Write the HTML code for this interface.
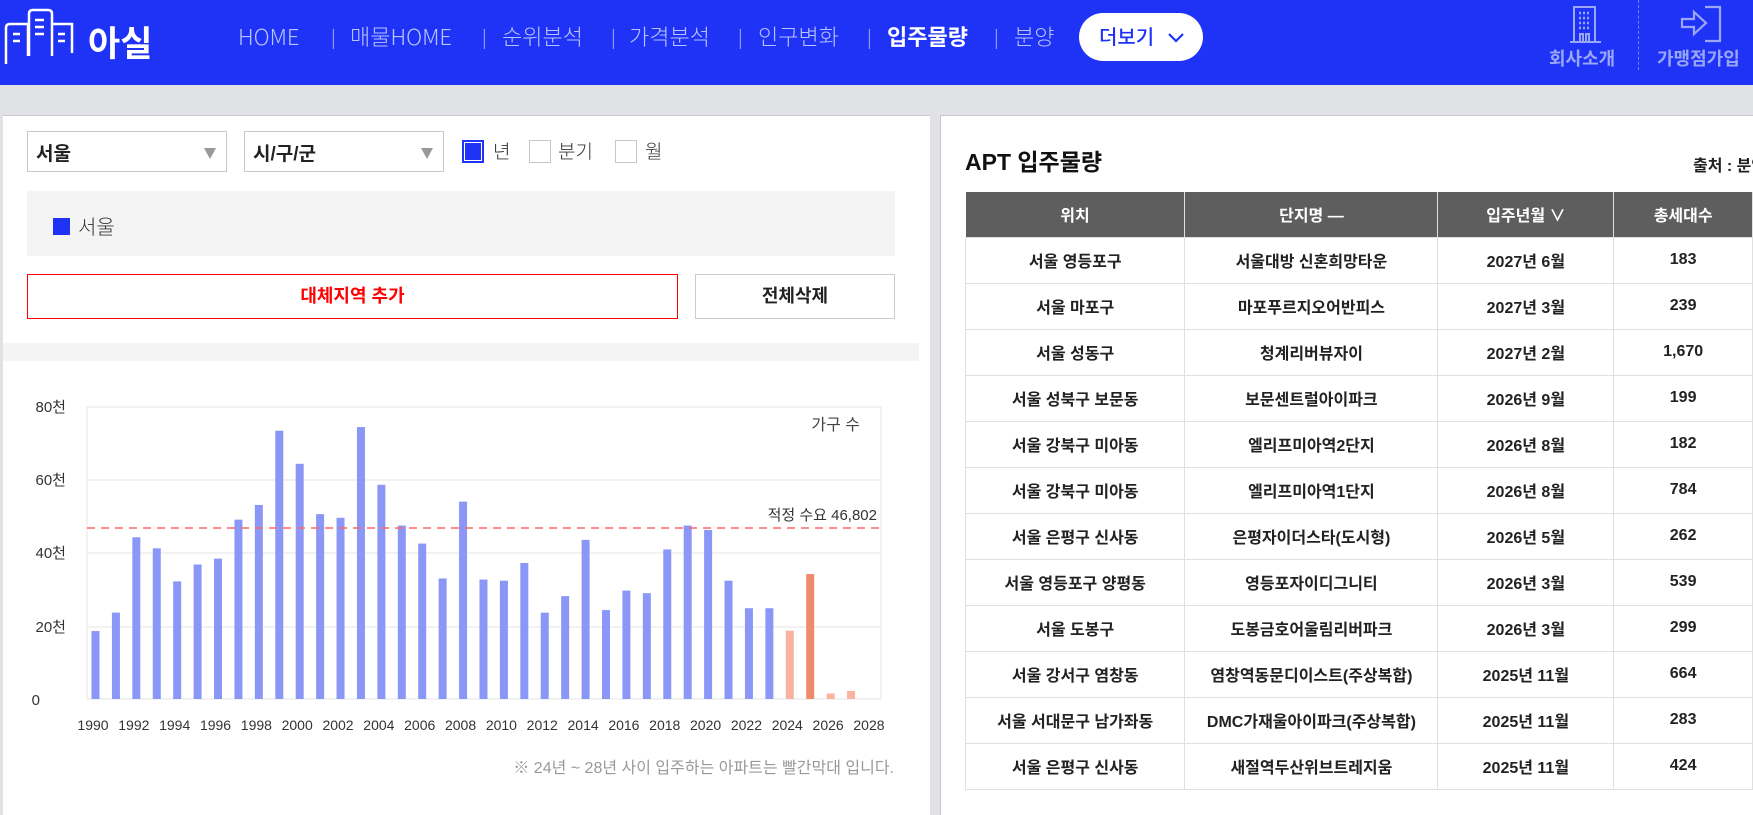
<!DOCTYPE html>
<html><head><meta charset="utf-8"><style>
*{margin:0;padding:0;box-sizing:border-box}
body{width:1753px;height:775px;overflow:hidden;background:#e1e2e6;font-family:"Liberation Sans","Noto Sans CJK KR",sans-serif;position:relative}
.hdr{position:absolute;left:0;top:0;width:1753px;height:85px;background:#1f33f7}
.abs{position:absolute;white-space:nowrap}
.nav{color:#b8c3ff;font-size:22px;font-weight:300;top:20px;font-family:"Noto Sans CJK KR",sans-serif}
.sep{color:#8e9cf5;font-size:18px;top:24px;font-family:"Noto Sans CJK KR",sans-serif}
.lp{position:absolute;left:3px;top:115px;width:927px;height:700px;background:#fff;border-top:1px solid #c8c8cc}
.rp{position:absolute;left:940px;top:115px;width:820px;height:700px;background:#fff;border-top:1px solid #c8c8cc;border-left:1px solid #c8c8cc}
.sel{position:absolute;border:1px solid #c6c8cf;background:#fff;font-size:19px;font-weight:bold;color:#222;padding:7px 0 0 8px}
.sel:after{content:"";position:absolute;right:10px;top:16px;border-left:6px solid transparent;border-right:6px solid transparent;border-top:11px solid #999}
.cb{position:absolute;width:22px;height:23px;border:1px solid #c6c8cf;background:#fff}
.cbt{position:absolute;font-size:19px;color:#333;font-weight:300}
table{position:absolute;left:965px;top:192px;border-collapse:collapse;font-size:16px;font-weight:bold;color:#222}
th{background:#5e5e5e;color:#fff;height:45px;font-weight:bold;border-right:1px solid #e0e0e0;text-align:center;vertical-align:middle}
td{height:46px;border:1px solid #e0e0e0;text-align:center;vertical-align:middle}
</style></head><body>
<div class="hdr"></div>
<svg class="abs" style="left:0;top:0" width="160" height="70">
<g fill="none" stroke="#fff" stroke-width="2.5">
<path d="M6 64 V28 Q6 24 10 24 H28 V56"/>
<path d="M29 56 V14 Q29 10 33 10 H48 Q52 10 52 14 V56"/>
<path d="M52 24 H72 V53"/>
<path d="M13 34h7M13 41h7M35 20h9M35 27h9M35 34h9M58 34h7M58 41h7"/>
</g>
<text x="88" y="56" fill="#fff" font-size="35" font-weight="bold" font-family="Noto Sans CJK KR,sans-serif">아실</text>
</svg>
<div class="abs nav" style="left:238px">HOME</div>
<div class="abs sep" style="left:331px">|</div>
<div class="abs nav" style="left:350px">매물HOME</div>
<div class="abs sep" style="left:482px">|</div>
<div class="abs nav" style="left:502px">순위분석</div>
<div class="abs sep" style="left:611px">|</div>
<div class="abs nav" style="left:629px">가격분석</div>
<div class="abs sep" style="left:738px">|</div>
<div class="abs nav" style="left:758px">인구변화</div>
<div class="abs sep" style="left:867px">|</div>
<div class="abs nav" style="left:887px;color:#fff;font-weight:bold">입주물량</div>
<div class="abs sep" style="left:994px">|</div>
<div class="abs nav" style="left:1014px">분양</div>
<div class="abs" style="left:1079px;top:13px;width:124px;height:48px;background:#fff;border-radius:24px;color:#1f33f7;font-size:20px;font-weight:500;padding:10px 0 0 20px;font-family:'Noto Sans CJK KR',sans-serif;line-height:26px">더보기
<svg style="position:absolute;left:88px;top:19px" width="18" height="12"><path d="M2 2l7 7 7-7" fill="none" stroke="#1f33f7" stroke-width="2.2"/></svg></div>
<svg class="abs" style="left:1565px;top:5px" width="40" height="40" fill="none" stroke="#9aa6f8" stroke-width="2"><path d="M5 37h31M9 37V2h21v35M15 37v-8h3v8M21 37v-8h3v8"/><path d="M14 8h2M18 8h2M22 8h2M14 13h2M18 13h2M22 13h2M14 18h2M18 18h2M22 18h2M14 23h2M18 23h2M22 23h2" stroke-width="2.5"/></svg>
<div class="abs" style="left:1549px;top:45px;color:#9aa6f8;font-size:18px;font-weight:bold">회사소개</div>
<div class="abs" style="left:1638px;top:0;height:70px;border-left:1px dashed #7584f0"></div>
<svg class="abs" style="left:1679px;top:5px" width="46" height="38" fill="none" stroke="#9aa6f8" stroke-width="2.2"><path d="M26 2h15v34H26"/><path d="M3 14h12V7l12 11-12 11v-7H3z"/></svg>
<div class="abs" style="left:1657px;top:45px;color:#9aa6f8;font-size:18px;font-weight:bold">가맹점가입</div>

<div class="lp"></div>
<div class="sel" style="left:27px;top:131px;width:200px;height:41px">서울</div>
<div class="sel" style="left:244px;top:131px;width:200px;height:41px">시/구/군</div>
<div class="cb" style="left:462px;top:140px;border:2px solid #1f33f7;background:#1f33f7;box-shadow:inset 0 0 0 1px #fff"></div>
<div class="cbt" style="left:493px;top:137px">년</div>
<div class="cb" style="left:529px;top:140px"></div>
<div class="cbt" style="left:558px;top:137px">분기</div>
<div class="cb" style="left:615px;top:140px"></div>
<div class="cbt" style="left:645px;top:137px">월</div>
<div class="abs" style="left:27px;top:191px;width:868px;height:65px;background:#f4f4f4"></div>
<div class="abs" style="left:53px;top:218px;width:17px;height:17px;background:#1f33f7"></div>
<div class="abs" style="left:78px;top:211px;font-size:20px;color:#333;font-weight:300">서울</div>
<div class="abs" style="left:27px;top:274px;width:651px;height:45px;border:1.5px solid #f00;color:#f00;font-size:18px;font-weight:bold;text-align:center;line-height:42px">대체지역 추가</div>
<div class="abs" style="left:695px;top:274px;width:200px;height:45px;border:1.5px solid #ccc;color:#222;font-size:18px;font-weight:bold;text-align:center;line-height:42px">전체삭제</div>
<div class="abs" style="left:3px;top:343px;width:916px;height:18px;background:#f4f4f4"></div>

<svg class="abs" style="left:0;top:380px" width="930" height="395" font-family="Liberation Sans,Noto Sans CJK KR,sans-serif">
<g transform="translate(0,-380)">
<rect x="87" y="407" width="794" height="292" fill="none" stroke="#eee" stroke-width="1.5"/>
<path d="M87 480H881M87 553H881M87 627H881" stroke="#eee" stroke-width="1.5"/>
<g font-size="15" fill="#333" text-anchor="end"><text x="66" y="412">80천</text><text x="66" y="485">60천</text><text x="66" y="558">40천</text><text x="66" y="632">20천</text><text x="40" y="705">0</text></g>
<g id="bars"></g>
<path d="M87 528H881" stroke="#f66" stroke-width="1.5" stroke-dasharray="8,6"/>
<text x="877" y="520" font-size="15" fill="#333" text-anchor="end">적정 수요 46,802</text>
<text x="860" y="430" font-size="16" fill="#444" text-anchor="end">가구 수</text>
<g font-size="14" fill="#333" text-anchor="middle" id="xl"></g>
<text x="894" y="773" font-size="16" fill="#999" text-anchor="end">※ 24년 ~ 28년 사이 입주하는 아파트는 빨간막대 입니다.</text>
</g></svg>
<script>
var v=[18.5,23.5,44,41,32,36.6,38.2,48.8,52.8,73,64,50.3,49.3,74,58.3,47.2,42.3,32.8,53.7,32.5,32.2,37,23.5,28,43.3,24.2,29.5,28.8,40.7,47.2,46,32.2,24.7,24.7,18.6,34,1.5,2.2];
var b='',l='';
for(var i=0;i<v.length;i++){var cx=95.5+20.42*i,h=v[i]*3.675;var c=(i==34||i>=36)?'#f9b3a0':(i==35?'#f08a6c':'#8a97f6');b+='<rect x="'+(cx-4)+'" y="'+(699-h)+'" width="8" height="'+h+'" fill="'+c+'"/>';}
for(var y=1990;y<=2028;y+=2){l+='<text x="'+(93+20.42*(y-1990))+'" y="730">'+y+'</text>';}
document.getElementById('bars').innerHTML=b;document.getElementById('xl').innerHTML=l;
</script>

<div class="rp"></div>
<div class="abs" style="left:965px;top:143px;font-size:23px;font-weight:bold;color:#111">APT 입주물량</div>
<div class="abs" style="left:1693px;top:152px;font-size:16px;font-weight:bold;color:#222">출처 : 분양정보</div>
<table>
<tr><th style="width:243px">위치</th><th style="width:278px">단지명 —</th><th style="width:192px">입주년월 ∨</th><th style="width:150px">총세대수</th></tr>
<tr><td>서울 영등포구</td><td>서울대방 신혼희망타운</td><td>2027년 6월</td><td>183</td></tr>
<tr><td>서울 마포구</td><td>마포푸르지오어반피스</td><td>2027년 3월</td><td>239</td></tr>
<tr><td>서울 성동구</td><td>청계리버뷰자이</td><td>2027년 2월</td><td>1,670</td></tr>
<tr><td>서울 성북구 보문동</td><td>보문센트럴아이파크</td><td>2026년 9월</td><td>199</td></tr>
<tr><td>서울 강북구 미아동</td><td>엘리프미아역2단지</td><td>2026년 8월</td><td>182</td></tr>
<tr><td>서울 강북구 미아동</td><td>엘리프미아역1단지</td><td>2026년 8월</td><td>784</td></tr>
<tr><td>서울 은평구 신사동</td><td>은평자이더스타(도시형)</td><td>2026년 5월</td><td>262</td></tr>
<tr><td>서울 영등포구 양평동</td><td>영등포자이디그니티</td><td>2026년 3월</td><td>539</td></tr>
<tr><td>서울 도봉구</td><td>도봉금호어울림리버파크</td><td>2026년 3월</td><td>299</td></tr>
<tr><td>서울 강서구 염창동</td><td>염창역동문디이스트(주상복합)</td><td>2025년 11월</td><td>664</td></tr>
<tr><td>서울 서대문구 남가좌동</td><td>DMC가재울아이파크(주상복합)</td><td>2025년 11월</td><td>283</td></tr>
<tr><td>서울 은평구 신사동</td><td>새절역두산위브트레지움</td><td>2025년 11월</td><td>424</td></tr>
</table>
</body></html>
